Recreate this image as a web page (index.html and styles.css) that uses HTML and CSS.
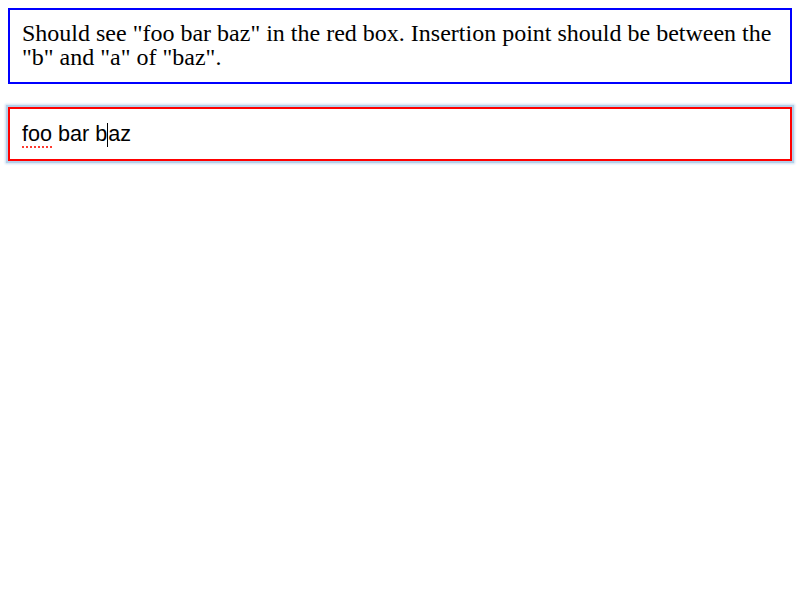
FILE: index.html
```html
<!DOCTYPE html>
<html>
<head>
<meta charset="utf-8">
<link rel="stylesheet" href="styles.css">
</head>
<body>
<div class="note">Should see "foo bar baz" in the red box. Insertion point should be between the "b" and "a" of "baz".</div>
<div class="edit"><span class="misspelled">foo</span> bar b<span class="caret"></span>az</div>
</body>
</html>
```
FILE: styles.css
```css
html, body {
  margin: 0;
  padding: 0;
  background: #fff;
}
body {
  padding: 8px;
  font-family: "Liberation Serif", serif;
  font-size: 24px;
  color: #000;
}
.note {
  border: 2px solid #0000ff;
  padding: 11px 12px 13px;
  line-height: 24px;
}
.edit {
  margin-top: 23px;
  border: 2px solid #ff0000;
  padding: 12px;
  font-family: "Liberation Sans", Arial, sans-serif;
  font-size: 21.6px;
  line-height: 25px;
  box-shadow: 0 0 0 2px #b4cfe9, 0 0 2px 3px #cfe0f1;
}
.misspelled {
  text-decoration: underline dotted #ff3b30;
  text-decoration-thickness: 2px;
  text-underline-offset: 5px;
}
.caret {
  display: inline-block;
  width: 1px;
  height: 24px;
  background: #000;
  vertical-align: -6px;
}
```
